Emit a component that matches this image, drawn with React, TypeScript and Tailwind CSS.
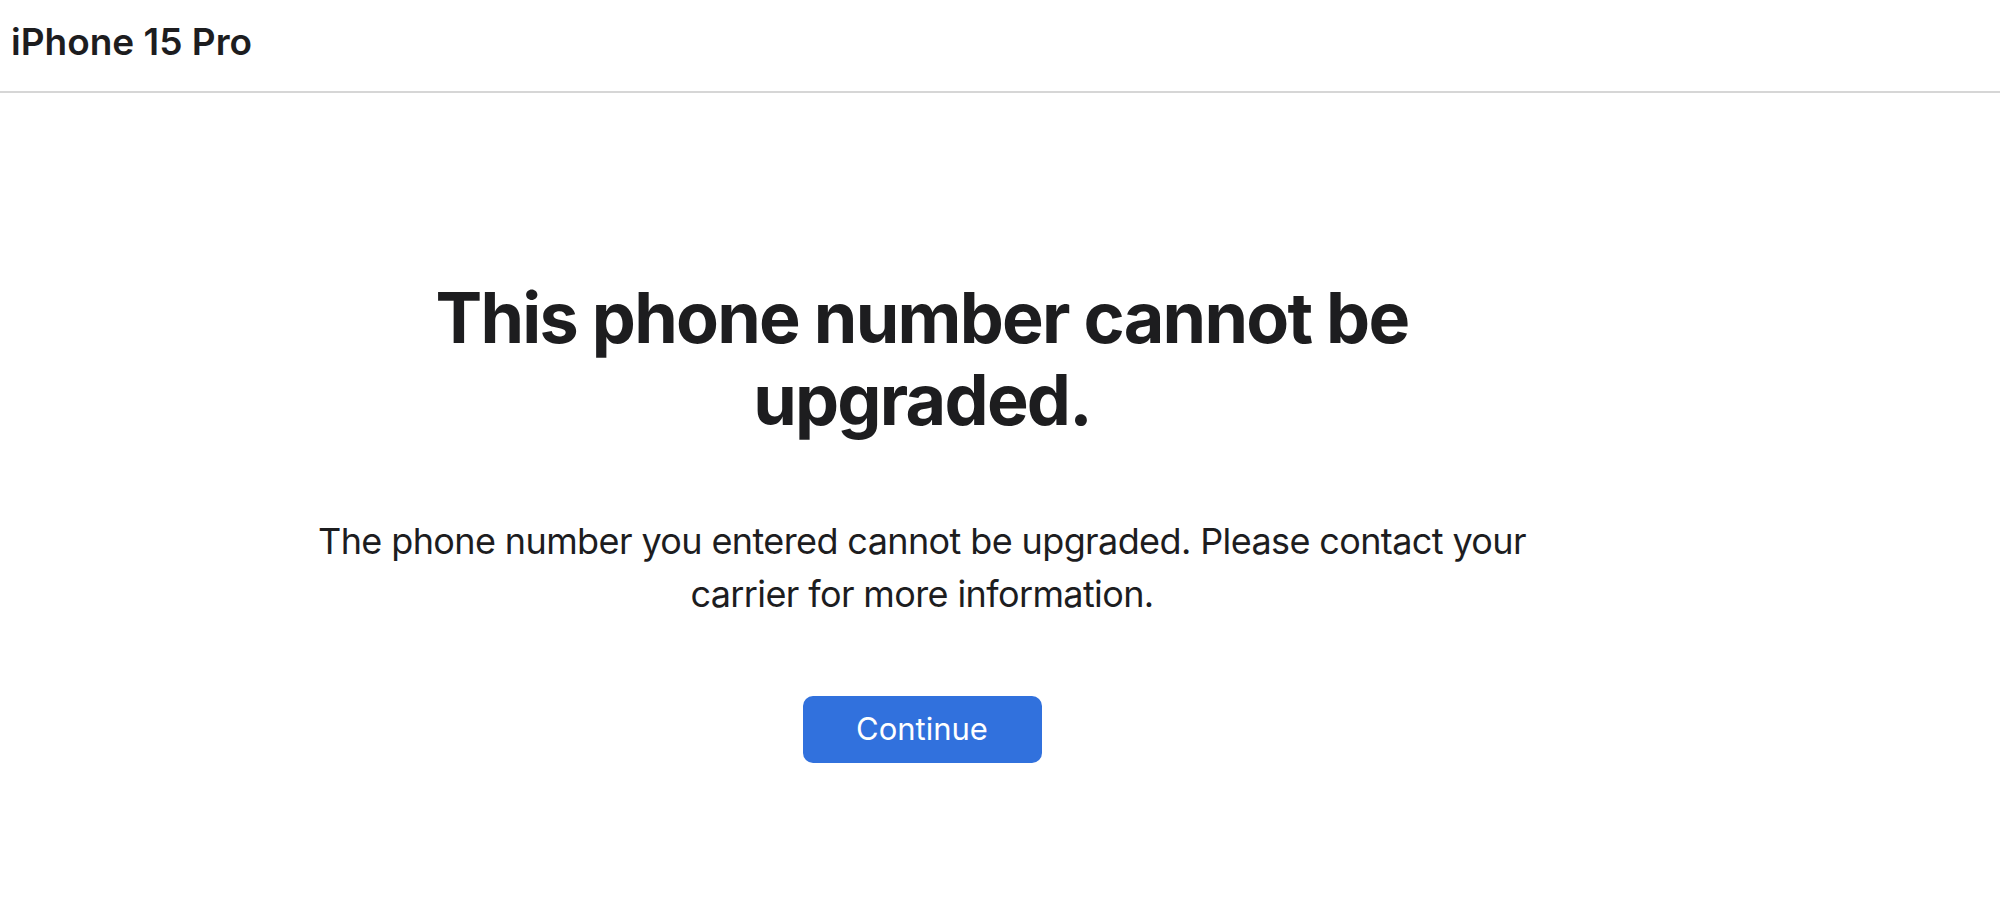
import React from "react";

const App: React.FC = () => {
  return (
    <div
      className="min-h-screen bg-white text-[#1d1d1f]"
      style={{ fontFamily: "Inter, 'Noto Sans', sans-serif" }}
    >
      <header className="h-[93px] border-b-2 border-[#d6d6d6] pl-[11px] pt-[20px]">
        <h1 className="text-[37px] leading-[44px] font-semibold">
          iPhone 15 Pro
        </h1>
      </header>

      <main className="flex flex-col items-center pr-[156px] pt-[184px]">
        <h2 className="w-[1000px] text-center text-[70px] leading-[82px] font-bold tracking-[-0.025em]">
          This phone number cannot be upgraded.
        </h2>
        <p className="mt-[74px] w-[1240px] text-center text-[36px] leading-[53px] tracking-[-0.017em]">
          The phone number you entered cannot be upgraded. Please contact your
          carrier for more information.
        </p>
        <button
          type="button"
          className="mt-[75px] h-[67px] w-[239px] rounded-[10px] bg-[#3171dd] text-[31px] text-white"
        >
          Continue
        </button>
      </main>
    </div>
  );
};

export default App;
